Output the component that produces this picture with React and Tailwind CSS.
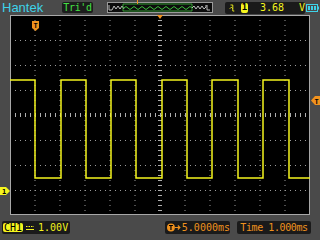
import React from 'react'

const mono = { fontFamily: '"DejaVu Sans Mono", "Liberation Mono", monospace' }

// grid geometry: 12 x 8 divisions of 25px, dots every 5px
const X0 = 10, Y0 = 0, W = 300, H = 200

function Scope() {
    const dots = []
    for (let i = 1; i < 12; i++) {
        const x = X0 + i * 25
        if (i === 6) continue
        dots.push(<line key={'v' + i} x1={x} y1={Y0 + 5} x2={x} y2={Y0 + H} stroke="#9a9a9a" strokeDasharray="1 4" />)
    }
    for (let j = 1; j < 8; j++) {
        const y = Y0 + j * 25
        if (j === 4) continue
        dots.push(<line key={'h' + j} x1={X0 + 5} y1={y + 0.5} x2={X0 + W} y2={y + 0.5} stroke="#9a9a9a" strokeDasharray="1 4" />)
    }
    const ticks = []
    for (let x = X0 + 5; x < X0 + W; x += 5) {
        ticks.push(<line key={'tx' + x} x1={x + 0.5} y1={98} x2={x + 0.5} y2={102} stroke="#b0b0b0" />)
    }
    for (let y = Y0 + 5; y < Y0 + H; y += 5) {
        ticks.push(<line key={'ty' + y} x1={158} y1={y + 0.5} x2={162} y2={y + 0.5} stroke="#b0b0b0" />)
    }

    // square wave
    const hi = 65, lo = 163
    const falls = [35, 86, 136, 187, 238, 289]
    const rises = [61, 111, 162, 212, 263]
    let d = `M ${X0} ${hi}`
    for (let k = 0; k < falls.length; k++) {
        d += ` L ${falls[k]} ${hi} L ${falls[k]} ${lo}`
        if (k < rises.length) d += ` L ${rises[k]} ${lo} L ${rises[k]} ${hi}`
    }
    d += ` L ${X0 + W} ${lo}`

    return (
        <svg width="320" height="200" viewBox="0 0 320 200" className="block">
            <rect x={X0} y={Y0} width={W} height={H} fill="#000" />
            {dots}
            {ticks}
            <rect x={X0 + 0.5} y={Y0 + 0.5} width={W - 1} height={H - 1} fill="none" stroke="#a8a8a8" />
            <path d={d} fill="none" stroke="#f5f51e" strokeWidth="1.5" />
            {/* trigger position marker (top-left) */}
            <path d="M32 6 H39 V13 L35.5 16 L32 13 Z" fill="#f0921e" />
            <text x="35.5" y="12.5" fontSize="7" fontWeight="bold" textAnchor="middle" fill="#000" style={mono}>T</text>
            {/* center top marker */}
            <path d="M157 0 H163 L160 4 Z" fill="#f0921e" />
            {/* trigger level marker (right) */}
            <path d="M320 81 H315 L311 85.5 L315 90 H320 Z" fill="#f0921e" />
            <text x="316.5" y="88.5" fontSize="7" fontWeight="bold" textAnchor="middle" fill="#000" style={mono}>T</text>
            {/* channel 1 ground marker (left) */}
            <path d="M0 172 H6 L10 176 L6 180 H0 Z" fill="#f5f51e" />
            <text x="4" y="179" fontSize="7" fontWeight="bold" textAnchor="middle" fill="#000" style={mono}>1</text>
        </svg>
    )
}

export default function App() {
    return (
        <div className="w-[320px] h-[240px] bg-[#4a4a4a] flex flex-col overflow-hidden">
            {/* top bar */}
            <div className="h-[15px] flex items-center relative">
                <span className="ml-[2px] w-[60px] text-[13px] leading-none text-[#3ed2e8]" style={{ fontFamily: '"Liberation Sans", Arial, sans-serif' }}>Hantek</span>
                <span className="h-[11px] w-[31px] flex items-center justify-center bg-[#1c1c1c] rounded-[2px] text-[10px] leading-none text-[#44e044] tracking-[-0.3px]" style={mono}>Tri'd</span>
                <div className="ml-[14px] h-[11px] w-[106px] bg-[#0c0c0c] border border-[#9a9a9a] flex items-center relative">
                    <svg width="104" height="9" viewBox="0 0 104 9" className="block">
                        <path d="M1 2 V7 H4 L6 3 L8 6 L10 3 L12 6 L14 3 L16 6" fill="none" stroke="#bdbdbd" strokeWidth="1" />
                        <path d="M16 5 Q18 2 20 5 T24 5 T28 5 T32 5 T36 5 T40 5 T44 5 T48 5 T52 5 T56 5 T60 5 T64 5 T68 5 T72 5 T76 5 T80 5 T84 5" fill="none" stroke="#3cc03c" strokeWidth="1" />
                        <path d="M15 1 H84 V8 H15 Z" fill="none" stroke="#3cc03c" strokeWidth="0.8" />
                        <path d="M84 5 L86 3 L88 6 L90 3 L92 6 L94 3 L96 6 L98 4 V2 M99 2 V7 H102" fill="none" stroke="#bdbdbd" strokeWidth="1" />
                    </svg>
                    <svg width="7" height="5" viewBox="0 0 7 5" className="absolute left-[26px] -top-[4px]">
                        <path d="M0 0 H7 V1 H4 V5 H3 V1 H0 Z" fill="#f0921e" />
                    </svg>
                </div>
                <div className="ml-[12px] h-[12px] w-[80px] bg-[#1a1a1a] rounded-[2px] flex items-center text-[#f5f51e] text-[10px] leading-none" style={mono}>
                    <svg width="8" height="10" viewBox="0 0 8 10" className="ml-[4px]">
                        <path d="M2 1 H5 V9 H7 M1 6 L3 4 L5 6" fill="none" stroke="#f5f51e" strokeWidth="1.2" />
                    </svg>
                    <span className="ml-[6px] w-[9px] h-[10px] bg-[#f5f51e] rounded-[2px] text-black text-[9px] font-bold flex items-center justify-center">1</span>
                    <span className="ml-[12px]">3.68</span>
                    <span className="ml-[15px]">V</span>
                </div>
                <svg width="13" height="8" viewBox="0 0 13 8" className="ml-[1px]">
                    <rect x="0.5" y="0.5" width="11" height="7" fill="none" stroke="#3ed2e8" />
                    <rect x="12" y="2.5" width="1" height="3" fill="#3ed2e8" />
                    <rect x="2" y="2" width="2" height="4" fill="#3ed2e8" />
                    <rect x="5" y="2" width="2" height="4" fill="#3ed2e8" />
                    <rect x="8" y="2" width="2" height="4" fill="#3ed2e8" />
                </svg>
            </div>

            <Scope />

            {/* bottom bar */}
            <div className="flex-1 flex items-center">
                <div className="ml-[2px] h-[13px] w-[68px] bg-[#1a1a1a] rounded-[2px] flex items-center text-[10px] leading-none text-[#f5f51e]" style={mono}>
                    <span className="ml-[1px] h-[9px] px-[1px] bg-[#f5f51e] rounded-[2px] text-black flex items-center">CH1</span>
                    <svg width="8" height="6" viewBox="0 0 8 6" className="ml-[3px]">
                        <path d="M0 1.5 H8" stroke="#f5f51e" strokeDasharray="1.5 1" />
                        <path d="M0 4.5 H8" stroke="#f5f51e" />
                    </svg>
                    <span className="ml-[4px]">1.00V</span>
                </div>
                <div className="ml-[95px] h-[13px] w-[65px] bg-[#1a1a1a] rounded-[2px] flex items-center text-[10px] leading-none text-[#f0921e]" style={mono}>
                    <svg width="14" height="9" viewBox="0 0 14 9" className="ml-[2px]">
                        <circle cx="4" cy="4.5" r="4" fill="#f0921e" />
                        <path d="M2 2.5 H6 M4 2.5 V7" stroke="#000" strokeWidth="1.2" />
                        <path d="M8 4.5 H13 M11 2.5 L13 4.5 L11 6.5" fill="none" stroke="#f0921e" strokeWidth="1.2" />
                    </svg>
                    <span className="ml-[1px]">5.0000ms</span>
                </div>
                <div className="ml-[7px] h-[13px] w-[74px] bg-[#1a1a1a] rounded-[2px] flex items-center justify-center text-[10px] leading-none text-[#f0921e]" style={mono}>
                    <span className="tracking-[-0.4px]">Time 1.000ms</span>
                </div>
            </div>
        </div>
    )
}
